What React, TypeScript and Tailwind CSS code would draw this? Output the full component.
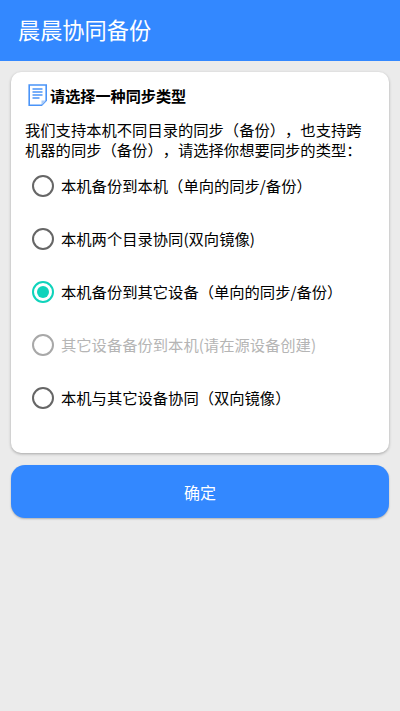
import React from "react";

const font = { fontFamily: '"Noto Sans CJK SC", sans-serif' };

const options = [
  { label: "本机备份到本机（单向的同步/备份）" },
  { label: "本机两个目录协同(双向镜像)" },
  { label: "本机备份到其它设备（单向的同步/备份）", checked: true },
  { label: "其它设备备份到本机(请在源设备创建)", disabled: true },
  { label: "本机与其它设备协同（双向镜像）" },
];

function DocIcon() {
  return (
    <svg width="20" height="22" viewBox="0 0 20 22" className="shrink-0">
      <path d="M1.2 1h17v15.5l-4.7 4.8H1.2z" fill="#fff" stroke="#4a94f8" strokeWidth="1.6" />
      <path d="M4.5 5h10M4.5 8h10M4.5 11h10M4.5 14h7" stroke="#4a94f8" strokeWidth="1.4" />
      <path d="M13.5 21.3v-4.8H18.2z" fill="#a9ccfa" />
    </svg>
  );
}

function Radio({ checked, disabled }: { checked?: boolean; disabled?: boolean }) {
  const color = checked ? "border-[#0fd3bb]" : disabled ? "border-[#a8a8a8]" : "border-[#666666]";
  return (
    <span className={`grid h-[22px] w-[22px] shrink-0 place-items-center rounded-full border-2 ${color}`}>
      {checked && <span className="h-3 w-3 rounded-full bg-[#0fd3bb]" />}
    </span>
  );
}

export default function App() {
  return (
    <div className="min-h-[711px] bg-[#ebebeb] [text-spacing-trim:space-all]" style={font}>
      <div className="flex h-[61px] items-center bg-[#3388ff] pb-[1px] pl-[18px] text-[22.2px] text-white">晨晨协同备份</div>
      <div className="mx-[11px] mt-[11px] h-[381px] rounded-[10px] bg-white pl-[14px] pr-4 pt-[11px] shadow-[0_1px_3px_rgba(0,0,0,0.3)]">
        <div className="flex items-center gap-[2px] pl-[3px] text-[15.15px] font-bold leading-[24px] text-black">
          <DocIcon />
          请选择一种同步类型
        </div>
        <p className="mt-3 text-[15.3px] leading-[20px] text-black">
          我们支持本机不同目录的同步（备份），也支持跨机器的同步（备份），请选择你想要同步的类型：
        </p>
        <div className="pl-[7px]">
          {options.map((o) => (
            <div key={o.label} className="flex h-[53px] items-center gap-[7px]">
              <Radio checked={o.checked} disabled={o.disabled} />
              <span className={`whitespace-nowrap text-[15.3px] ${o.disabled ? "text-[#b5b5b5]" : "text-black"}`}>{o.label}</span>
            </div>
          ))}
        </div>
      </div>
      <div className="mx-[11px] mt-3 flex h-[53px] items-center justify-center rounded-[14px] bg-[#3388ff] text-[16px] text-white shadow-[0_1px_2px_rgba(0,0,0,0.25)]">
        确定
      </div>
    </div>
  );
}
